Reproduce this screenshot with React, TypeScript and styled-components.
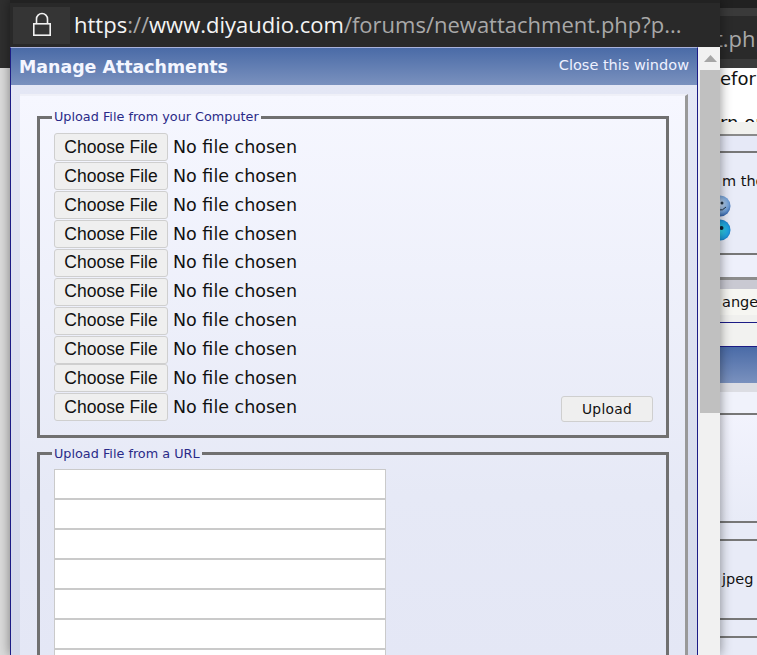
import React from "react";
import styled, { createGlobalStyle } from "styled-components";

const Global = createGlobalStyle`
  html, body { margin: 0; padding: 0; background: #fff; }
  * { box-sizing: border-box; }
`;

const Stage = styled.div`
  position: relative;
  width: 757px;
  height: 655px;
  overflow: hidden;
`;

const BackPage = styled.div`
  display: flex;
  width: 757px;
  height: 655px;
`;

const LeftEdge = styled.div`
  flex: none;
  width: 10px;
  background: linear-gradient(#2f2f2f 68px, #dcdcdc 68px);
`;

const BackColumn = styled.div`
  flex: 1;
  min-width: 0;
  display: flex;
  flex-direction: column;
`;

const Strip = styled.div<{ $h: number; $bg: string; $pad?: number; $top?: boolean }>`
  height: ${(p) => p.$h}px;
  flex: none;
  background: ${(p) => p.$bg};
  display: flex;
  align-items: ${(p) => (p.$top ? "flex-start" : "center")};
  padding-left: ${(p) => p.$pad ?? 0}px;
  overflow: hidden;
  white-space: nowrap;
  font-family: "DejaVu Sans", sans-serif;
  color: #111;
`;

const BackUrl = styled.span`
  font-family: "Open Sans", sans-serif;
  font-size: 22px;
  color: #a8a8a8;
`;

const BackText = styled.span<{ $size?: number }>`
  font-size: ${(p) => p.$size ?? 18}px;
  line-height: 1;
`;

const Smileys = styled.div`
  display: flex;
  flex-direction: column;
  gap: 2px;
`;

const Popup = styled.div`
  position: absolute;
  left: 10px;
  top: 0;
  width: 710px;
  height: 655px;
  display: flex;
  flex-direction: column;
  box-shadow: 0 0 11px rgba(0, 0, 0, 0.45);
  background: #f1f1f4;
`;

const AddressBar = styled.div`
  flex: none;
  height: 47px;
  display: flex;
  align-items: center;
  gap: 4px;
  padding: 3px 0 0 3px;
  background: #292929;
  border-top: 3px solid #222;
`;

const LockBox = styled.div`
  flex: none;
  width: 57px;
  height: 37px;
  padding-bottom: 3px;
  background: #353535;
  display: flex;
  align-items: center;
  justify-content: center;
  margin-top: -2px;
`;

const Url = styled.div`
  font-family: "Open Sans", sans-serif;
  font-size: 22px;
  color: #a8a8a8;
  white-space: nowrap;
  margin-top: -5px;
`;

const UrlBright = styled.span`
  color: #f4f4f4;
`;

const Lower = styled.div`
  flex: 1;
  min-height: 0;
  display: flex;
`;

const Win = styled.div`
  flex: none;
  width: 688px;
  margin-right: 2px;
  display: flex;
  flex-direction: column;
  overflow: hidden;
  border: 1px solid #1c1c86;
  border-top-color: #a9b2dc;
  border-bottom: none;
`;

const TitleBar = styled.div`
  flex: none;
  height: 37px;
  display: flex;
  align-items: center;
  justify-content: space-between;
  padding: 0 8px 0 8px;
  background: linear-gradient(#4a6ba7, #7a91be);
  font-family: "DejaVu Sans", sans-serif;
  color: #f4f6ff;
`;

const Title = styled.div`
  font-size: 17.4px;
  font-weight: 700;
`;

const CloseLink = styled.a`
  font-size: 14.5px;
  color: #eef1ff;
  margin-top: -3px;
`;

const Body = styled.div`
  flex: 1;
  min-height: 0;
  padding: 9px 9px 0 9px;
  background: linear-gradient(#e4e7f5, #d3d8ea);
`;

const Panel = styled.div`
  height: 640px;
  display: flex;
  flex-direction: column;
  gap: 9px;
  padding: 14px 16px 0 17px;
  border-right: 3px solid #999;
  border-top: 2px solid #eff0f8;
  background: linear-gradient(#f6f7ff 0, #e6e9f6 400px, #e3e6f5 100%);
`;

const Group = styled.fieldset`
  margin: 0;
  padding: 0 13px 13px 14px;
  min-width: 0;
  border: 3px solid #707070;
`;

const Legend = styled.legend`
  margin-left: -2px;
  padding: 0 2px;
  font-family: "DejaVu Sans", sans-serif;
  font-size: 12.8px;
  line-height: 14px;
  color: #2a2a88;
`;

const UploadGrid = styled.div`
  display: flex;
  justify-content: space-between;
  align-items: flex-end;
  margin-top: 8.9px;
`;

const FileList = styled.div`
  display: flex;
  flex-direction: column;
`;

const FileRow = styled.div`
  height: 28.9px;
  display: flex;
  align-items: center;
  gap: 5px;
`;

const ChooseButton = styled.button`
  width: 114px;
  height: 28px;
  padding: 0;
  background: #efefef;
  border: 1px solid #cfcfcf;
  border-radius: 3px;
  font-family: "Liberation Sans", Arial, sans-serif;
  font-size: 17.5px;
  color: #111;
`;

const NoFile = styled.span`
  font-family: "DejaVu Sans", sans-serif;
  font-size: 17.5px;
  color: #111;
  white-space: nowrap;
  margin-top: -1px;
`;

const UploadButton = styled.button`
  width: 92px;
  height: 26px;
  padding: 1px 0 0;
  background: #efefef;
  border: 1px solid #cfcfcf;
  border-radius: 3px;
  font-family: "DejaVu Sans", sans-serif;
  font-size: 13.8px;
  letter-spacing: 0.3px;
  color: #111;
`;

const UrlList = styled.div`
  display: flex;
  flex-direction: column;
  margin-top: 8px;
`;

const UrlInput = styled.input`
  display: block;
  width: 332px;
  height: 30px;
  flex: none;
  background: #fff;
  border: 1px solid #cacaca;
  border-radius: 0;
  outline: none;
`;

const Scrollbar = styled.div`
  flex: none;
  width: 20px;
  display: flex;
  flex-direction: column;
  background: #f1f1f1;
`;

const ScrollUp = styled.div`
  height: 23px;
  display: flex;
  align-items: center;
  justify-content: center;
`;

const ScrollThumb = styled.div`
  height: 343px;
  background: #c0c0c0;
`;

const LockIcon = () => (
  <svg width="20" height="26" viewBox="0 0 20 26" fill="none" stroke="#f2f2f2" strokeWidth="1.6">
    <path d="M4.5 13V8a5.5 5.5 0 0 1 11 0v5" />
    <rect x="1.8" y="12.8" width="16.4" height="11.4" />
  </svg>
);

const ArrowUp = () => (
  <svg width="13" height="7" viewBox="0 0 13 7">
    <path d="M6.5 0 13 7H0z" fill="#a6a6a6" />
  </svg>
);

const SmileyA = () => (
  <svg width="22" height="22" viewBox="0 0 22 22" display="block">
    <defs>
      <radialGradient id="sa" cx="0.5" cy="0.4" r="0.6">
        <stop offset="0" stopColor="#d8e6f6" />
        <stop offset="0.7" stopColor="#6f9fd8" />
        <stop offset="1" stopColor="#2f5fa8" />
      </radialGradient>
    </defs>
    <circle cx="11" cy="11" r="10.5" fill="url(#sa)" />
    <circle cx="13" cy="8" r="1.5" fill="#234" />
    <path d="M9 15q5 1 8-3" stroke="#234" fill="none" />
  </svg>
);

const SmileyB = () => (
  <svg width="22" height="22" viewBox="0 0 22 22" display="block">
    <defs>
      <radialGradient id="sb" cx="0.5" cy="0.5" r="0.6">
        <stop offset="0" stopColor="#35e0e8" />
        <stop offset="0.7" stopColor="#1d9ee0" />
        <stop offset="1" stopColor="#1a5fb0" />
      </radialGradient>
    </defs>
    <circle cx="11" cy="11" r="10.5" fill="url(#sb)" />
    <circle cx="12.5" cy="9" r="2" fill="#123" />
  </svg>
);

const FILE_ROWS = Array.from({ length: 10 }, (_, i) => i);
const URL_ROWS = Array.from({ length: 7 }, (_, i) => i);
const LINE = "#777";

export default function App() {
  return (
    <Stage>
      <Global />
      <BackPage>
        <LeftEdge />
        <BackColumn>
          <Strip $h={8} $bg="#212121" />
          <Strip $h={8} $bg="#3a3a3a" />
          <Strip $h={43} $bg="#2a2a2a" $pad={705}>
            <BackUrl>t.php</BackUrl>
          </Strip>
          <Strip $h={9} $bg="#3a3a3a" />
          <Strip $h={22} $bg="#fff" $pad={710}>
            <BackText>efor</BackText>
          </Strip>
          <Strip $h={24} $bg="#fff" />
          <Strip $h={8} $bg="#fff" $pad={710} $top>
            <BackText>rn or</BackText>
          </Strip>
          <Strip $h={12} $bg="#f1f1ee" />
          <Strip $h={2} $bg="#8a8a8a" />
          <Strip $h={15} $bg="#e6e9f7" />
          <Strip $h={2} $bg={LINE} />
          <Strip $h={19} $bg="#e9ecf8" />
          <Strip $h={18} $bg="#e9ecf8" $pad={712}>
            <BackText $size={14.5}>m the</BackText>
          </Strip>
          <Strip $h={5} $bg="#e9ecf8" />
          <Strip $h={46} $bg="#e9ecf8" $pad={699}>
            <Smileys>
              <SmileyA />
              <SmileyB />
            </Smileys>
          </Strip>
          <Strip $h={12} $bg="#e9ecf8" />
          <Strip $h={2} $bg={LINE} />
          <Strip $h={22} $bg="#eef0fb" />
          <Strip $h={3} $bg="#8c8c8c" />
          <Strip $h={9} $bg="#c9c9d2" />
          <Strip $h={26} $bg="#f6f6f2" $pad={712}>
            <BackText $size={14.5}>ange</BackText>
          </Strip>
          <Strip $h={7} $bg="#f0f0ee" />
          <Strip $h={1} $bg="#1c1c86" />
          <Strip $h={23} $bg="#f2f2f0" />
          <Strip $h={1} $bg="#1c1c86" />
          <Strip $h={36} $bg="linear-gradient(#4a6ba7, #7a91be)" />
          <Strip $h={9} $bg="#dcdde3" />
          <Strip $h={21} $bg="#f0f2fb" />
          <Strip $h={2} $bg={LINE} />
          <Strip $h={106} $bg="linear-gradient(#f2f3fd, #e8ebf7)" />
          <Strip $h={2} $bg={LINE} />
          <Strip $h={16} $bg="#e8ebf7" />
          <Strip $h={2} $bg={LINE} />
          <Strip $h={77} $bg="#e8ebf7" $pad={712}>
            <BackText $size={14.5}>jpeg</BackText>
          </Strip>
          <Strip $h={2} $bg={LINE} />
          <Strip $h={16} $bg="#e8ebf7" />
          <Strip $h={2} $bg={LINE} />
          <Strip $h={17} $bg="#e8ebf7" />
        </BackColumn>
      </BackPage>
      <Popup>
        <AddressBar>
          <LockBox>
            <LockIcon />
          </LockBox>
          <Url>
            <UrlBright>https</UrlBright>://<UrlBright>www.diyaudio.com</UrlBright>/forums/newattachment.php?p...
          </Url>
        </AddressBar>
        <Lower>
          <Win>
            <TitleBar>
              <Title>Manage Attachments</Title>
              <CloseLink>Close this window</CloseLink>
            </TitleBar>
            <Body>
              <Panel>
                <Group>
                  <Legend>Upload File from your Computer</Legend>
                  <UploadGrid>
                    <FileList>
                      {FILE_ROWS.map((i) => (
                        <FileRow key={i}>
                          <ChooseButton>Choose File</ChooseButton>
                          <NoFile>No file chosen</NoFile>
                        </FileRow>
                      ))}
                    </FileList>
                    <UploadButton>Upload</UploadButton>
                  </UploadGrid>
                </Group>
                <Group>
                  <Legend>Upload File from a URL</Legend>
                  <UrlList>
                    {URL_ROWS.map((i) => (
                      <UrlInput key={i} />
                    ))}
                  </UrlList>
                </Group>
              </Panel>
            </Body>
          </Win>
          <Scrollbar>
            <ScrollUp>
              <ArrowUp />
            </ScrollUp>
            <ScrollThumb />
          </Scrollbar>
        </Lower>
      </Popup>
    </Stage>
  );
}
